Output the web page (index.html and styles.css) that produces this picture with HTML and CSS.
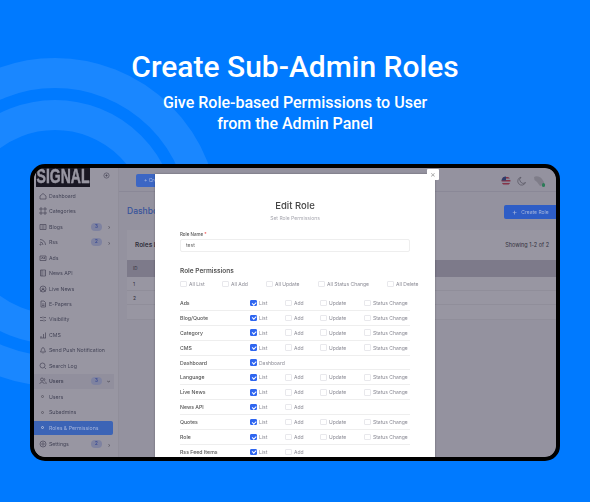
FILE: index.html
```html
<!DOCTYPE html>
<html lang="en">
<head>
<meta charset="utf-8">
<title>Create Sub-Admin Roles</title>
<link rel="stylesheet" href="styles.css">
</head>
<body>
<svg class="rings" width="590" height="502" viewBox="0 0 590 502" aria-hidden="true">
  <circle cx="55" cy="222" r="107"/>
  <circle cx="55" cy="222" r="149"/>
</svg>
<header class="hero">
  <h1>Create Sub-Admin Roles</h1>
  <p>Give Role-based Permissions to User<br>from the Admin Panel</p>
</header>
<section class="device">
  <div class="screen">
    <aside class="side">
      <div class="brand"><span class="logo"><span class="word">SIGNAL</span></span>
        <svg class="pin" viewBox="0 0 8 8"><circle cx="4" cy="4" r="3"/><circle cx="4" cy="4" r=".8" class="fill"/></svg>
      </div>
      <nav class="menu">
        <a><svg viewBox="0 0 8 8"><path d="M1 4 4 1.500 7 4V7H1Z"/></svg>Dashboard</a>
        <a><svg viewBox="0 0 8 8"><path d="M1 1h2v2H1ZM5 1h2v2H5ZM1 5h2v2H1ZM5 5h2v2H5Z"/></svg>Categories</a>
        <a><svg viewBox="0 0 8 8"><path d="M1 1.500h6v5H1ZM2.500 3h3M2.500 5h3"/></svg>Blogs<b class="badge">3</b><i>›</i></a>
        <a><svg viewBox="0 0 8 8"><path d="M1 1.500A5.500 5.500 0 0 1 6.500 7M1 4A3 3 0 0 1 4 7"/><circle cx="1.500" cy="6.500" r=".6"/></svg>Rss<b class="badge">2</b><i>›</i></a>
        <a><svg viewBox="0 0 8 8"><path d="M1 2h6v4.500H1ZM2.500 5l1-2 1 2M5.500 3v2"/></svg>Ads</a>
        <a><svg viewBox="0 0 8 8"><path d="M1.500 1h5v6h-5ZM3 1v6M4.500 3h1M4.500 5h1"/></svg>News API</a>
        <a><svg viewBox="0 0 8 8"><circle cx="4" cy="4" r="3"/><circle cx="4" cy="4" r="1"/><path d="M1.500 6.500 4 4l2.500 2.500"/></svg>Live News</a>
        <a><svg viewBox="0 0 8 8"><path d="M2 1h3l1.500 1.500V7H2ZM3 4h2.500M3 5.500h2.500"/></svg>E-Papers</a>
        <a><svg viewBox="0 0 8 8"><path d="M1 2.500h2M5 2.500h2M1 5.500h3M6 5.500h1M4 1.500v2M5 4.500v2"/></svg>Visibility</a>
        <a><svg viewBox="0 0 8 8"><path d="M1 7h6M2 7V5M4.500 7V3M6.500 7V1.500"/></svg>CMS</a>
        <a><svg viewBox="0 0 8 8"><path d="M1.500 6C2.500 5 2 2 4 1.500 6 2 5.500 5 6.500 6ZM3.500 7h1"/></svg>Send Push Notification</a>
        <a><svg viewBox="0 0 8 8"><circle cx="3.500" cy="3.500" r="2.500"/><path d="M5.500 5.500 7 7"/></svg>Search Log</a>
        <a class="open"><svg viewBox="0 0 8 8"><circle cx="3" cy="2.500" r="1.500"/><path d="M.8 7C1 4.500 5 4.500 5.200 7M5 1.200a1.500 1.500 0 0 1 0 2.700M6 4.500C6.800 5 7.200 6 7.200 7"/></svg>Users<b class="badge">3</b><i class="down">›</i></a>
        <a class="sub"><span class="dot"></span>Users</a>
        <a class="sub"><span class="dot"></span>Subadmins</a>
        <a class="sub on"><span class="dot"></span>Roles &amp; Permissions</a>
        <a class="last"><svg viewBox="0 0 8 8"><circle cx="4" cy="4" r="3"/><circle cx="4" cy="4" r="1.200"/></svg>Settings<b class="badge">2</b><i>›</i></a>
      </nav>
    </aside>
    <main class="main">
      <div class="top">
        <span class="addin">+ Create</span>
        <span class="tools">
          <svg class="flag" viewBox="0 0 10 10"><defs><clipPath id="fc"><circle cx="5" cy="5" r="4.500"/></clipPath></defs><g clip-path="url(#fc)"><rect width="10" height="10" fill="#e8e8ee"/><path d="M0 1h10v1.400H0ZM0 4h10v1.400H0ZM0 7h10v1.400H0Z" fill="#d83a4a"/><rect width="5" height="4.500" fill="#2c4a90"/></g></svg>
          <svg class="moon" viewBox="0 0 10 10"><path d="M8.500 6.500A4 4 0 1 1 4 1.200 3.300 3.300 0 0 0 8.500 6.500Z"/></svg>
          <span class="user">
            <svg viewBox="0 0 12 12"><path d="M1 2C3 .5 7 1 9 4l2 3v3L7 11 4 7 1.500 5Z"/></svg>
            <span class="online"></span>
          </span>
        </span>
      </div>
      <div class="head">
        <h2>Dashboard</h2>
        <span class="create"><span class="plus">+</span>Create Role</span>
      </div>
      <div class="card">
        <div class="cardhead"><span class="cardtitle">Roles List</span><span class="count">Showing 1-2 of 2</span></div>
        <div class="thead">ID</div>
        <div class="tr">1</div>
        <div class="tr">2</div>
        <div class="tr"></div>
      </div>
    </main>
    <div class="scrim"></div>
    <div class="modal">
      <h3>Edit Role</h3>
      <p class="hint">Set Role Permissions</p>
      <label class="lbl">Role Name <em>*</em></label>
      <div class="input">test</div>
      <h4>Role Permissions</h4>
      <div class="allrow">
        <span class="chk a1"><u></u>All List</span>
        <span class="chk a2"><u></u>All Add</span>
        <span class="chk a3"><u></u>All Update</span>
        <span class="chk a4"><u></u>All Status Change</span>
        <span class="chk a5"><u></u>All Delete</span>
      </div>
      <div class="perms">
        <div class="row"><b>Ads</b><span class="chk"><u class="y"></u>List</span><span class="chk"><u></u>Add</span><span class="chk"><u></u>Update</span><span class="chk"><u></u>Status Change</span></div>
        <div class="row"><b>Blog/Quote</b><span class="chk"><u class="y"></u>List</span><span class="chk"><u></u>Add</span><span class="chk"><u></u>Update</span><span class="chk"><u></u>Status Change</span></div>
        <div class="row"><b>Category</b><span class="chk"><u class="y"></u>List</span><span class="chk"><u></u>Add</span><span class="chk"><u></u>Update</span><span class="chk"><u></u>Status Change</span></div>
        <div class="row"><b>CMS</b><span class="chk"><u class="y"></u>List</span><span class="chk"><u></u>Add</span><span class="chk"><u></u>Update</span><span class="chk"><u></u>Status Change</span></div>
        <div class="row"><b>Dashboard</b><span class="chk"><u class="y"></u>Dashboard</span></div>
        <div class="row"><b>Language</b><span class="chk"><u class="y"></u>List</span><span class="chk"><u></u>Add</span><span class="chk"><u></u>Update</span><span class="chk"><u></u>Status Change</span></div>
        <div class="row"><b>Live News</b><span class="chk"><u class="y"></u>List</span><span class="chk"><u></u>Add</span><span class="chk"><u></u>Update</span><span class="chk"><u></u>Status Change</span></div>
        <div class="row"><b>News API</b><span class="chk"><u class="y"></u>List</span><span class="chk"><u></u>Add</span></div>
        <div class="row"><b>Quotes</b><span class="chk"><u class="y"></u>List</span><span class="chk"><u></u>Add</span><span class="chk"><u></u>Update</span><span class="chk"><u></u>Status Change</span></div>
        <div class="row"><b>Role</b><span class="chk"><u class="y"></u>List</span><span class="chk"><u></u>Add</span><span class="chk"><u></u>Update</span><span class="chk"><u></u>Status Change</span></div>
        <div class="row"><b>Rss Feed Items</b><span class="chk"><u class="y"></u>List</span><span class="chk"><u></u>Add</span></div>
      </div>
    </div>
    <span class="close">×</span>
  </div>
</section>
</body>
</html>
```
FILE: styles.css
```css
* { box-sizing: border-box; }
html, body { margin: 0; height: 100%; }
body { position: relative; width: 590px; height: 502px; overflow: hidden; background: #007aff; font-family: Inter, "Liberation Sans", sans-serif; }
.rings { position: absolute; left: 0; top: 0; }
.rings circle { fill: none; stroke: #1a87ff; stroke-width: 30; }
.hero { position: relative; padding-top: 49px; text-align: center; color: #fff; font-family: Roboto, "Liberation Sans", sans-serif; height: 164px; }
.hero h1 { margin: 0; font-size: 30px; line-height: 36px; font-weight: 500; }
.hero p { margin: 7px 0 0; font-size: 16px; line-height: 21px; font-weight: 500; }
.device { position: relative; margin: 0 30px; height: 297px; border: 4px solid #000; border-radius: 15px; background: #000; overflow: hidden; }
.screen { position: relative; display: flex; height: 100%; background: #f6f6f9; border-radius: 11px; overflow: hidden; filter: blur(.4px); }
.side { width: 85px; flex: none; background: #fff; border-right: 1px solid #eee; }
.brand { display: flex; height: 20px; padding-left: 2px; position: relative; }
.logo { display: flex; justify-content: center; flex: none; width: 54px; height: 19px; background: #000; }
.word { display: block; height: 13px; color: #fff; font: 700 14px/13px "Liberation Sans", sans-serif; transform: scaleY(1.4); transform-origin: top; -webkit-text-stroke: .3px #fff; }
.pin { position: absolute; right: 8px; top: 4px; width: 7px; height: 7px; }
svg { fill: none; stroke: #5c5c68; stroke-width: .7; }
.fill { fill: #666; }
.menu { display: flex; flex-direction: column; }
.menu a { display: flex; align-items: center; height: 15.470px; padding-left: 5px; font-size: 5.200px; color: #555a68; position: relative; }
.menu a svg { width: 8px; height: 8px; margin-right: 2px; flex: none; }
.badge { position: absolute; left: 57px; width: 11px; height: 8px; border-radius: 4px; background: #cbd6fb; color: #3a62e0; font-size: 4.500px; line-height: 8px; text-align: center; font-weight: 600; }
.menu i { position: absolute; left: 74px; font-style: normal; font-size: 6px; color: #666; }
.menu i.down { transform: rotate(90deg); }
.open { background: #f1f1f4; margin-right: 4px; font-weight: 600; }
.sub .dot { width: 3px; height: 3px; margin: 0 5px 0 2px; border: .6px solid #888; border-radius: 50%; flex: none; }
.menu .on { position: relative; z-index: 1; background: #3c64b6; color: #a4b4dc; margin-right: 5px; border-radius: 0 2px 2px 0; height: 14px; margin-top: .7px; margin-bottom: .77px; }
.menu .on .dot { border-color: #b4c0e0; }
.menu .last { margin-top: 1px; }
.main { flex: 1; min-width: 0; }
.top { display: flex; align-items: center; justify-content: space-between; height: 24px; padding: 0 11px 0 17px; border-bottom: 1px solid #e2e2e8; }
.addin { position: relative; z-index: 1; display: block; width: 40px; height: 13px; margin-top: 1px; padding-left: 8px; background: #3c66c4; color: #a9b8de; font-size: 5px; line-height: 13px; border-radius: 2px; }
.tools { display: flex; align-items: center; gap: 6px; padding-top: 2px; }
.flag { width: 10px; height: 10px; stroke: none; }
.moon { width: 10px; height: 10px; stroke: #777; }
.user { position: relative; width: 12px; height: 12px; display: block; }
.user svg { width: 12px; height: 12px; display: block; stroke: none; fill: #ccc; }
.online { position: absolute; right: 0; bottom: 0; width: 3.500px; height: 3.500px; border-radius: 50%; background: #26c96a; }
.head { display: flex; align-items: center; justify-content: space-between; height: 38px; padding-left: 8px; }
.head h2 { margin: 0; font-size: 8.500px; font-weight: 500; color: #3a78f0; }
.create { position: relative; z-index: 1; display: flex; align-items: center; gap: 4px; width: 52px; height: 14px; margin-top: 2px; padding-left: 8px; background: #2e5dc6; color: #a4b4dc; font-size: 5px; border-radius: 2px 0 0 2px; }
.plus { font-size: 8px; line-height: 8px; }
.card { margin-left: 8px; background: #fff; }
.cardhead { display: flex; align-items: center; justify-content: space-between; height: 30px; padding: 0 7px 0 8px; font-size: 5.500px; color: #333; }
.cardtitle { font-size: 6.500px; font-weight: 600; }
.thead { height: 17px; padding-left: 6px; background: #c8c6cf; font-size: 4.500px; line-height: 17px; color: #333; }
.tr { height: 14.200px; padding-left: 6px; border-bottom: 1px solid #eee; font-size: 5px; line-height: 14px; color: #333; }
.scrim { position: absolute; inset: 0; background: rgba(50, 45, 70, .5); }
.modal { position: absolute; z-index: 2; left: 121px; top: 6px; width: 280px; bottom: -20px; padding: 26px 25px 0; background: #fff; box-shadow: 0 0 2px rgba(0,0,0,.3); }
.modal h3 { margin: 0; text-align: center; font-size: 9.500px; line-height: 12px; font-weight: 500; color: #444; }
.hint { margin: 3px 0 0; text-align: center; font-size: 5px; line-height: 7px; color: #a8a8b0; }
.lbl { display: block; margin-top: 10px; font-size: 4.500px; line-height: 6px; font-weight: 500; color: #555; }
.lbl em { color: #e33; font-style: normal; }
.input { height: 13px; margin-top: 1px; padding-left: 5px; border: 1px solid #eee; border-radius: 2px; font-size: 5px; line-height: 11px; color: #666; }
.modal h4 { margin: 15px 0 0; font-size: 6.500px; line-height: 8px; font-weight: 600; color: #555; }
.chk { display: flex; align-items: center; font-size: 5px; color: #8a8a94; white-space: nowrap; }
.chk u { display: block; width: 6.500px; height: 6.500px; margin-right: 2.500px; border: 1px solid #e8e8ec; border-radius: 1px; flex: none; }
.chk u.y { background: #2f66f0; border-color: #2f66f0; position: relative; }
.chk u.y::after { content: ""; position: absolute; left: .9px; top: .9px; width: 2.800px; height: 1.500px; border-left: .7px solid #fff; border-bottom: .7px solid #fff; transform: rotate(-45deg); }
.allrow { display: flex; height: 16px; margin-top: 1px; align-items: center; }
.allrow .chk { flex: none; }
.a1 { width: 42px; }
.a2 { width: 44px; }
.a3 { width: 52px; }
.a4 { width: 69px; }
.a5 { width: 23px; }
.perms { margin-top: 4px; }
.row { display: grid; grid-template-columns: 70px 35px 35px 44px 46px; align-items: center; height: 14.900px; border-bottom: 1px solid #eee; }
.row b { font-size: 5.200px; font-weight: 500; color: #555; }
.close { position: absolute; z-index: 3; left: 393px; top: 1px; width: 12px; height: 11px; background: #fff; color: #999; border-radius: 1px; font-size: 8px; line-height: 11px; text-align: center; }
```
